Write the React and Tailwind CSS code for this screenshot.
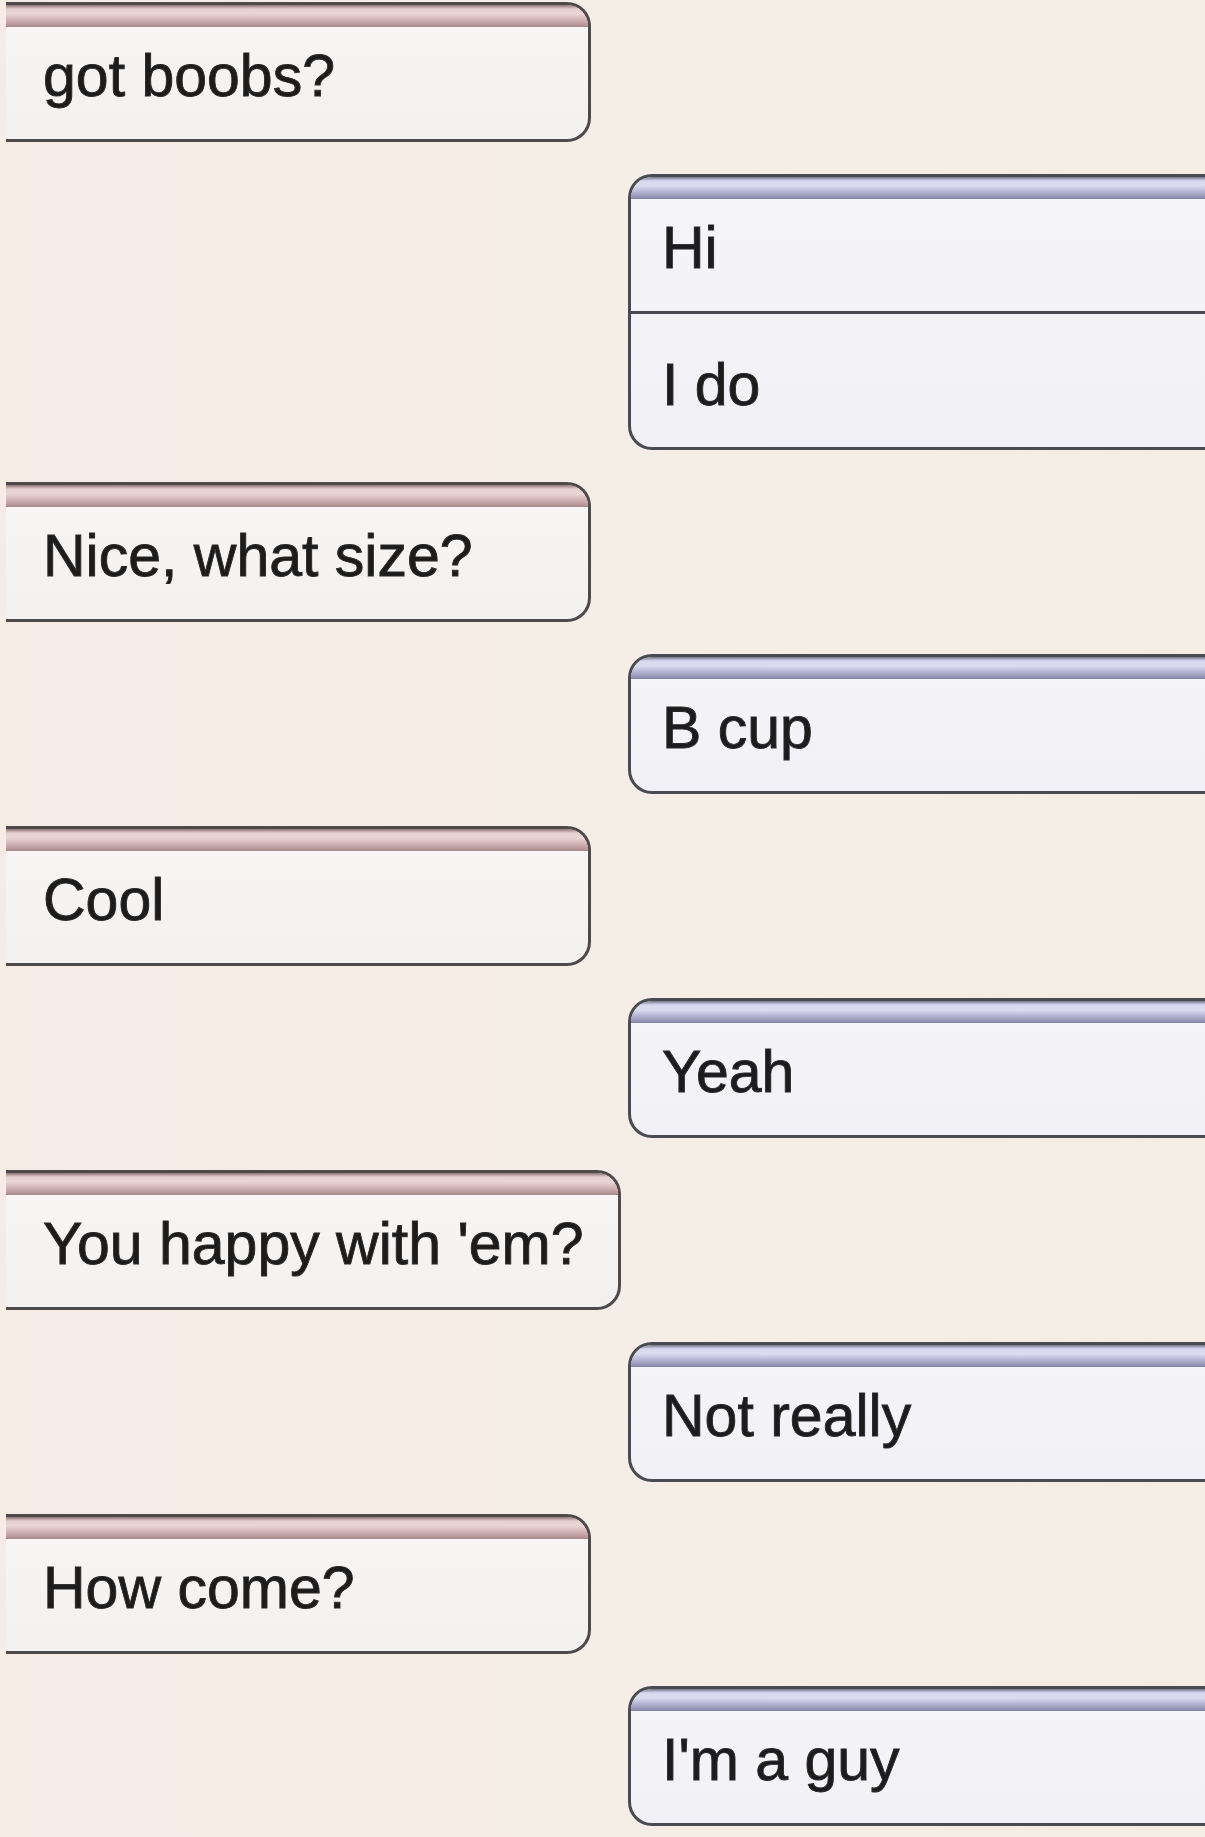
import React from "react";

const leftBand = "h-[22px] bg-[linear-gradient(to_bottom,#8d7474_0%,#e6cfd0_18%,#ead6d6_40%,#c9a9aa_75%,#a88a8c_100%)]";
const rightBand = "h-[22px] bg-[linear-gradient(to_bottom,#75758f_0%,#d8d8ee_18%,#dcdcef_40%,#a9a9c8_75%,#8585a8_100%)]";
const textCls = "text-[59px] leading-[59px] text-[#1c1c1c] [-webkit-text-stroke:0.9px_#2a2a2a] whitespace-nowrap";

function Left({ text, wide }) {
  return (
    <div
      className={
        (wide ? "w-[615px] " : "w-[585px] ") +
        "ml-[6px] h-[140px] shrink-0 border-[3px] border-l-0 border-[#4e4a4a] rounded-r-[24px] overflow-hidden bg-[linear-gradient(to_bottom,#f9f7f6,#f3f1f0)] flex flex-col"
      }
    >
      <div className={leftBand} />
      <div className={"pl-[37px] pt-[20px] " + textCls}>{text}</div>
    </div>
  );
}

function Right({ texts }) {
  const double = texts.length === 2;
  return (
    <div
      className={
        (double ? "h-[276px] " : "h-[140px] ") +
        "ml-[628px] w-[577px] shrink-0 border-[3px] border-r-0 border-[#4a4a52] rounded-l-[24px] overflow-hidden bg-[linear-gradient(to_bottom,#f6f6f9,#f1f1f5)] flex flex-col"
      }
    >
      <div className={rightBand} />
      <div className={(double ? "h-[112px] " : "") + "pl-[31px] pt-[20px] " + textCls}>{texts[0]}</div>
      {double && (
        <div className={"border-t-[3px] border-[#4a4a52] pl-[31px] pt-[42px] flex-1 " + textCls}>
          {texts[1]}
        </div>
      )}
    </div>
  );
}

export default function App() {
  return (
    <div
      className="w-[1205px] h-[1837px] overflow-hidden bg-[linear-gradient(to_right,#f7ebe6,#f5eee6_50%,#f4ede6)] relative"
      style={{ fontFamily: '"Liberation Sans", Arial, sans-serif' }}
    >
      <div className="flex flex-col gap-[32px] pt-[2px] blur-[0.7px]">
        <Left text="got boobs?" />
        <Right texts={["Hi", "I do"]} />
        <Left text="Nice, what size?" />
        <Right texts={["B cup"]} />
        <Left text="Cool" />
        <Right texts={["Yeah"]} />
        <Left text="You happy with 'em?" wide />
        <Right texts={["Not really"]} />
        <Left text="How come?" />
        <Right texts={["I'm a guy"]} />
      </div>
    </div>
  );
}
